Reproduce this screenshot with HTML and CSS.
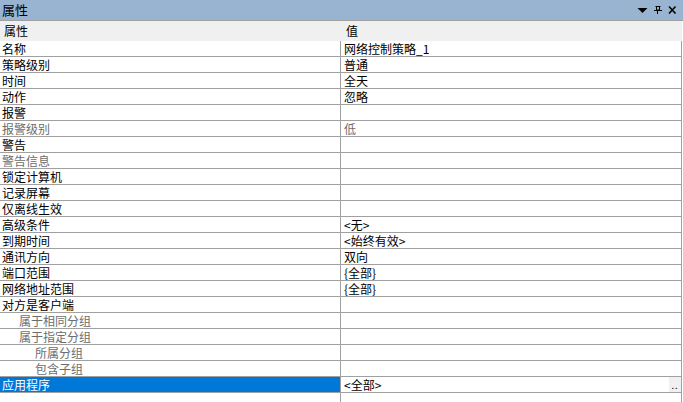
FILE: index.html
```html
<!DOCTYPE html>
<html lang="zh-CN">
<head>
  <meta charset="UTF-8">
  <title>属性</title>
  <link rel="stylesheet" href="styles.css">
</head>
<body>
  <div class="panel">
    <div class="titlebar">
      <span class="title">属性</span>
      <div class="tools">
        <svg class="tool" width="11" height="14" viewBox="0 0 11 14"><path d="M0.5 8h10l-5 5z" fill="#000"/></svg>
        <svg class="tool" width="8" height="14" viewBox="0 0 8 14"><path d="M2.5 6.5h3v3.5h-3z M1.5 6.5h1v3.5 M5.5 6.5h1" fill="none" stroke="#000"/><rect x="0" y="10" width="8" height="1" fill="#000"/><rect x="3" y="11" width="1" height="3" fill="#000"/><rect x="5" y="6" width="1" height="4" fill="#000"/></svg>
        <svg class="tool" width="9" height="14" viewBox="0 0 9 14"><path d="M1 6.5l6.5 7 M7.5 6.5l-6.5 7" fill="none" stroke="#000" stroke-width="1.6"/></svg>
      </div>
    </div>

    <div class="grid">
      <div class="head">
        <div class="cell">属性</div>
        <div class="cell val">值</div>
      </div>
      <div class="row"><div class="cell">名称</div><div class="cell val">网络控制策略_1</div></div>
      <div class="row"><div class="cell">策略级别</div><div class="cell val">普通</div></div>
      <div class="row"><div class="cell">时间</div><div class="cell val">全天</div></div>
      <div class="row"><div class="cell">动作</div><div class="cell val">忽略</div></div>
      <div class="row"><div class="cell">报警</div><div class="cell val"></div></div>
      <div class="row off"><div class="cell">报警级别</div><div class="cell val">低</div></div>
      <div class="row"><div class="cell">警告</div><div class="cell val"></div></div>
      <div class="row off"><div class="cell">警告信息</div><div class="cell val"></div></div>
      <div class="row"><div class="cell">锁定计算机</div><div class="cell val"></div></div>
      <div class="row"><div class="cell">记录屏幕</div><div class="cell val"></div></div>
      <div class="row"><div class="cell">仅离线生效</div><div class="cell val"></div></div>
      <div class="row"><div class="cell">高级条件</div><div class="cell val">&lt;无&gt;</div></div>
      <div class="row"><div class="cell">到期时间</div><div class="cell val">&lt;始终有效&gt;</div></div>
      <div class="row"><div class="cell">通讯方向</div><div class="cell val">双向</div></div>
      <div class="row"><div class="cell">端口范围</div><div class="cell val">{全部}</div></div>
      <div class="row"><div class="cell">网络地址范围</div><div class="cell val">{全部}</div></div>
      <div class="row"><div class="cell">对方是客户端</div><div class="cell val"></div></div>
      <div class="row off"><div class="cell lv1">属于相同分组</div><div class="cell val"></div></div>
      <div class="row off"><div class="cell lv1">属于指定分组</div><div class="cell val"></div></div>
      <div class="row off"><div class="cell lv2">所属分组</div><div class="cell val"></div></div>
      <div class="row off"><div class="cell lv2">包含子组</div><div class="cell val"></div></div>
      <div class="row selected">
        <div class="cell">应用程序</div>
        <div class="cell val">&lt;全部&gt;<span class="more">..</span></div>
      </div>
      <div class="row"><div class="cell"></div><div class="cell val"></div></div>
    </div>
  </div>
</body>
</html>
```

FILE: styles.css
```css
body {
  margin: 0;
  background: #fff;
  font-family: "Noto Sans CJK SC", "Liberation Sans", sans-serif;
  font-size: 12px;
  color: #000;
  overflow: hidden;
}
.panel {
  width: 683px;
  height: 402px;
}
.titlebar {
  height: 20px;
  background: #99b4d1;
  border-bottom: 1px solid #a0a0a0;
  display: flex;
  align-items: center;
  justify-content: space-between;
}
.title {
  padding-left: 2px;
  font-size: 13px;
  line-height: 20px;
}
.tools {
  display: flex;
  align-items: flex-start;
  gap: 6px;
  padding-right: 6px;
  height: 20px;
}
.tool {
  display: block;
}
.grid {
  width: 682px;
}
.head,
.row {
  display: grid;
  grid-template-columns: 341px 341px;
}
.head {
  height: 20px;
  background: #f0f0f0;
  line-height: 20px;
}
.head .cell {
  padding-left: 4px;
}
.head .val {
  padding-left: 5px;
}
.row {
  height: 16px;
  border-bottom: 1px solid #a0a0a0;
  box-sizing: border-box;
}
.row .cell {
  border-right: 1px solid #a0a0a0;
  line-height: 15px;
  padding-left: 2px;
  white-space: nowrap;
  overflow: hidden;
}
.row .cell:first-child {
  border-right-color: #a0a0a0;
}
.row .val {
  padding-left: 3px;
  position: relative;
}
.lv1 {
  padding-left: 19px !important;
}
.lv2 {
  padding-left: 35px !important;
}
.off .cell {
  color: #6d6d6d;
}
.selected .cell:first-child {
  background: #0078d7;
  color: #fff;
}
.more {
  position: absolute;
  right: 0;
  top: -1px;
  width: 12px;
  height: 16px;
  background: #f0f0f0;
  font-size: 9px;
  line-height: 20px;
  text-align: center;
  letter-spacing: 1px;
}
```
